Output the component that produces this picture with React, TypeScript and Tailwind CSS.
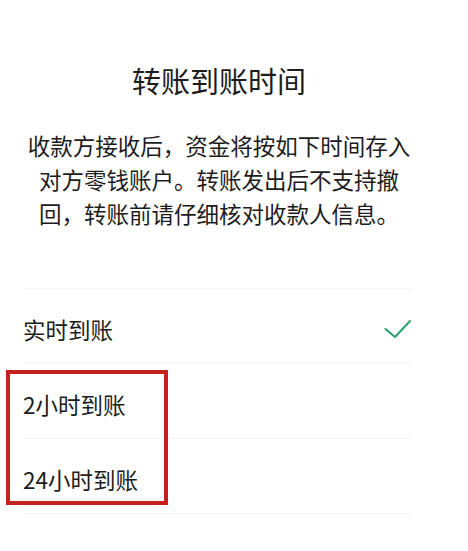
const rows = ["实时到账", "2小时到账", "24小时到账"];

const Check = () => (
  <svg width="27" height="20" viewBox="0 0 27 20" fill="none">
    <polyline points="1.5,10 11,18 26,2" stroke="#2a9d6a" strokeWidth="2" strokeLinecap="round" strokeLinejoin="round" />
  </svg>
);

const App = () => {
  return (
    <div
      className="w-[468px] h-[551px] bg-white text-[#1c1c1c] overflow-hidden"
      style={{ fontFamily: '"Noto Sans CJK SC", "Noto Sans", sans-serif' }}
    >
      <div className="w-[438px] flex flex-col items-center text-center">
        <h1 className="mt-[62px] text-[29px] leading-[36px] font-normal">转账到账时间</h1>
        <p className="mt-[30px] text-[22.5px] leading-[34px]">
          收款方接收后，资金将按如下时间存入
          <br />
          对方零钱账户。转账发出后不支持撤
          <br />
          回，转账前请仔细核对收款人信息。
        </p>
      </div>

      {/* 到账方式 */}
      <div className="relative mt-[58px] ml-[23px] w-[388px] border-t border-[#f4f4f4]">
        {rows.map((label, i) => (
          <div key={label} className="h-[75px] pt-[6px] flex items-center justify-between border-b border-[#f4f4f4]">
            <span className="text-[22.5px] leading-[30px]">{label}</span>
            {i === 0 && <Check />}
          </div>
        ))}
        <div className="absolute left-[-17px] top-[81px] w-[162px] h-[135px] border-[4px] border-[#c4201c]" />
      </div>
    </div>
  );
};

export default App;
